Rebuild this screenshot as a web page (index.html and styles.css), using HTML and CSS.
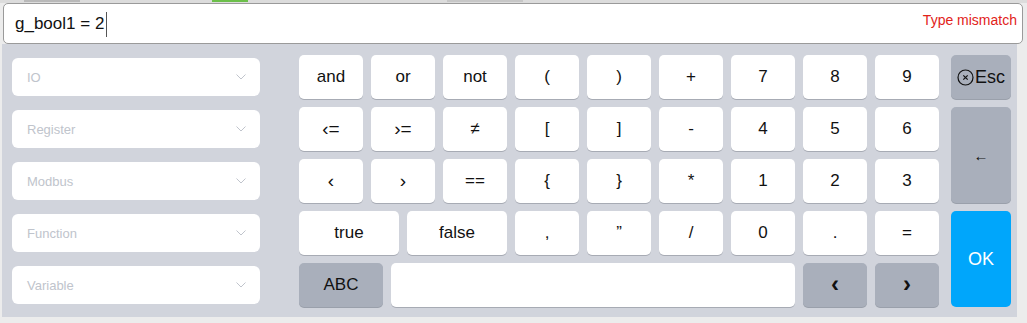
FILE: index.html
```html
<!DOCTYPE html>
<html>
<head>
	<meta charset="UTF-8">
	<title>Expression keyboard</title>
	<link rel="stylesheet" href="styles.css">
</head>
<body>
<div class="CLS_Behind">
	<span class="CLS_Tab CLS_TabA"></span>
	<span class="CLS_Tab CLS_TabGreen"></span>
	<span class="CLS_Tab CLS_TabB"></span>
</div>

<div class="CLS_Input">
	<span class="CLS_Expr">g_bool1 = 2</span><span class="CLS_Caret"></span>
	<span class="CLS_Error">Type mismatch</span>
</div>

<div class="CLS_Panel">
	<div class="CLS_Selects">
		<div class="CLS_Select"><span>IO</span><svg width="10" height="6" viewBox="0 0 10 6"><polyline points="0.5,0.5 5,5 9.5,0.5" /></svg></div>
		<div class="CLS_Select"><span>Register</span><svg width="10" height="6" viewBox="0 0 10 6"><polyline points="0.5,0.5 5,5 9.5,0.5" /></svg></div>
		<div class="CLS_Select"><span>Modbus</span><svg width="10" height="6" viewBox="0 0 10 6"><polyline points="0.5,0.5 5,5 9.5,0.5" /></svg></div>
		<div class="CLS_Select"><span>Function</span><svg width="10" height="6" viewBox="0 0 10 6"><polyline points="0.5,0.5 5,5 9.5,0.5" /></svg></div>
		<div class="CLS_Select"><span>Variable</span><svg width="10" height="6" viewBox="0 0 10 6"><polyline points="0.5,0.5 5,5 9.5,0.5" /></svg></div>
	</div>

	<div class="CLS_Keys">
		<div class="CLS_Row">
			<a class="CLS_Key">and</a><a class="CLS_Key">or</a><a class="CLS_Key">not</a>
			<a class="CLS_Key">(</a><a class="CLS_Key">)</a><a class="CLS_Key">+</a>
			<a class="CLS_Key">7</a><a class="CLS_Key">8</a><a class="CLS_Key">9</a>
		</div>
		<div class="CLS_Row">
			<a class="CLS_Key CLS_Angle">‹=</a><a class="CLS_Key CLS_Angle">›=</a><a class="CLS_Key">≠</a>
			<a class="CLS_Key">[</a><a class="CLS_Key">]</a><a class="CLS_Key">-</a>
			<a class="CLS_Key">4</a><a class="CLS_Key">5</a><a class="CLS_Key">6</a>
		</div>
		<div class="CLS_Row">
			<a class="CLS_Key CLS_Angle">‹</a><a class="CLS_Key CLS_Angle">›</a><a class="CLS_Key">==</a>
			<a class="CLS_Key">{</a><a class="CLS_Key">}</a><a class="CLS_Key">*</a>
			<a class="CLS_Key">1</a><a class="CLS_Key">2</a><a class="CLS_Key">3</a>
		</div>
		<div class="CLS_Row">
			<a class="CLS_Key CLS_Wide">true</a><a class="CLS_Key CLS_Wide">false</a>
			<a class="CLS_Key">,</a><a class="CLS_Key">”</a><a class="CLS_Key">/</a>
			<a class="CLS_Key">0</a><a class="CLS_Key">.</a><a class="CLS_Key">=</a>
		</div>
		<div class="CLS_Row">
			<a class="CLS_Key CLS_Gray CLS_Abc">ABC</a>
			<a class="CLS_Key CLS_Space"></a>
			<a class="CLS_Key CLS_Gray CLS_Arrow">‹</a><a class="CLS_Key CLS_Gray CLS_Arrow">›</a>
		</div>
	</div>

	<div class="CLS_Cmds">
		<a class="CLS_Key CLS_Gray CLS_Esc"><svg width="17" height="17" viewBox="0 0 17 17"><circle cx="8.5" cy="8.5" r="7.5" /><path d="M6.3 6.3 L10.7 10.7 M10.7 6.3 L6.3 10.7" /></svg>Esc</a>
		<a class="CLS_Key CLS_Gray CLS_Back">←</a>
		<a class="CLS_Key CLS_Ok">OK</a>
	</div>
</div>
</body>
</html>
```

FILE: styles.css
```css
body {
	margin: 0;
	background: #ececec;
	font-family: "Liberation Sans", Arial, sans-serif;
	color: #111111;
}

.CLS_Behind {
	height: 3px;
	display: flex;
	background: #dcdcdc;
}

.CLS_Tab {
	display: block;
	height: 2px;
}

.CLS_TabA {
	margin-left: 24px;
	width: 56px;
	background: #b9b9b9;
}

.CLS_TabGreen {
	margin-left: 132px;
	width: 36px;
	background: #6cbf4a;
}

.CLS_TabB {
	margin-left: 199px;
	width: 76px;
	background: #c7c7c7;
}

.CLS_Input {
	margin-left: 3px;
	width: 1007px;
	height: 39px;
	background: #FFFFFF;
	border: 1px solid #9a9a9a;
	border-radius: 5px;
	display: flex;
	align-items: center;
	padding: 0 0 0 11px;
}

.CLS_Expr {
	font-size: 17px;
	color: #111111;
}

.CLS_Caret {
	width: 1px;
	height: 25px;
	background: #555555;
	margin-left: 2px;
	margin-top: 1px;
}

.CLS_Error {
	margin-left: auto;
	margin-right: 5px;
	margin-top: -8px;
	font-size: 14px;
	color: #e2231a;
}

.CLS_Panel {
	margin-left: 2px;
	width: 1015px;
	height: 273px;
	box-sizing: border-box;
	padding: 11px 6px 10px 10px;
	background: #d1d4dc;
	display: flex;
}

.CLS_Selects {
	width: 248px;
	padding-top: 3px;
	display: flex;
	flex-direction: column;
	gap: 14px;
	margin-right: 39px;
}

.CLS_Select {
	height: 38px;
	background: #FFFFFF;
	border-radius: 6px;
	display: flex;
	align-items: center;
	justify-content: space-between;
	padding: 0 14px 0 15px;
	font-size: 13px;
	color: #c0c4cc;
}

.CLS_Select svg polyline {
	fill: none;
	stroke: #c0c4cc;
	stroke-width: 1;
}

.CLS_Keys {
	display: flex;
	flex-direction: column;
	gap: 8px;
	margin-right: 12px;
}

.CLS_Row {
	display: flex;
	gap: 8px;
}

.CLS_Key {
	width: 64px;
	height: 44px;
	display: flex;
	align-items: center;
	justify-content: center;
	background: #FFFFFF;
	border-radius: 5px;
	box-shadow: 0 1px 0 #a7abb4;
	font-size: 17px;
	color: #111111;
	text-decoration: none;
}

.CLS_Angle {
	font-size: 19px;
}

.CLS_Wide {
	width: 100px;
}

.CLS_Gray {
	background: #a9afbb;
	box-shadow: 0 1px 0 #9aa0ab;
}

.CLS_Abc {
	width: 84px;
}

.CLS_Space {
	width: 404px;
}

.CLS_Arrow {
	font-size: 24px;
	font-weight: bold;
	padding-bottom: 2px;
	box-sizing: border-box;
}

.CLS_Cmds {
	width: 60px;
	display: flex;
	flex-direction: column;
	gap: 8px;
}

.CLS_Cmds .CLS_Key {
	width: 60px;
}

.CLS_Esc {
	font-size: 18px;
	gap: 1px;
}

.CLS_Esc svg circle {
	fill: none;
	stroke: #111111;
	stroke-width: 1.2;
}

.CLS_Esc svg path {
	stroke: #111111;
	stroke-width: 1.2;
}

.CLS_Back {
	height: 96px;
	font-size: 15px;
}

.CLS_Ok {
	height: 96px;
	background: #00a6fb;
	box-shadow: none;
	color: #FFFFFF;
	font-size: 18px;
}
```
